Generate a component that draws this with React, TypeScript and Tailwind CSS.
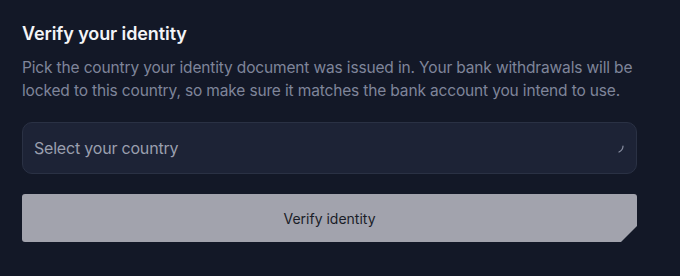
export default function App() {
  return (
    <div className="min-h-[276px] w-full bg-[#131827] font-['Inter',sans-serif]">
      <div className="ml-[22px] flex w-[615px] flex-col pt-[23px]">
        <h2 className="text-[18px] font-semibold leading-[22px] tracking-[-0.1px] text-[#f3f4f7]">Verify your identity</h2>
        <p className="mt-[11px] text-[15.5px] leading-[23px] tracking-[-0.15px] text-[#7f859a]">
          Pick the country your identity document was issued in. Your bank withdrawals will be locked to this
          country, so make sure it matches the bank account you intend to use.
        </p>

        <div className="mt-[20px] flex h-[52px] items-center justify-between rounded-[10px] border border-[#2a3144] bg-[#1d2336] pl-[11px] pr-[12px]">
          <span className="text-[16px] tracking-[-0.2px] text-[#9a9fae]">Select your country</span>
          <svg width="6" height="8" viewBox="0 0 6 8" className="mt-[2px]">
            <path d="M5 1 Q5 5 1 7" stroke="#8a90a3" strokeWidth="1.2" fill="none" strokeLinecap="round" />
          </svg>
        </div>

        <button
          type="button"
          className="mt-[20px] flex h-[48px] items-center justify-center rounded-[3px] bg-[#a2a3ad] text-[14px] text-[#1a1d28] [clip-path:polygon(0_0,100%_0,100%_calc(100%-16px),calc(100%-16px)_100%,0_100%)]"
        >
          Verify identity
        </button>
      </div>
    </div>
  );
}
